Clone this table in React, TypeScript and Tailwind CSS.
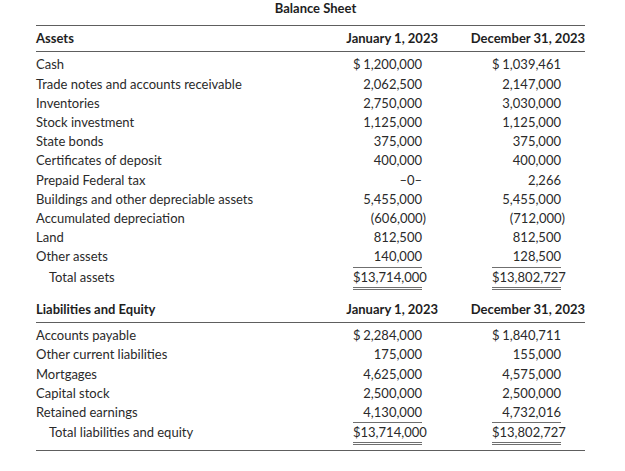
import React from "react";

type Row = {
  label: string;
  jan: string;
  dec: string;
  janDollar?: boolean;
  decDollar?: boolean;
  neg?: boolean;
  rule?: "single" | "double";
  indent?: boolean;
};

const assets: Row[] = [
  { label: "Cash", jan: "1,200,000", dec: "1,039,461", janDollar: true, decDollar: true },
  { label: "Trade notes and accounts receivable", jan: "2,062,500", dec: "2,147,000" },
  { label: "Inventories", jan: "2,750,000", dec: "3,030,000" },
  { label: "Stock investment", jan: "1,125,000", dec: "1,125,000" },
  { label: "State bonds", jan: "375,000", dec: "375,000" },
  { label: "Certificates of deposit", jan: "400,000", dec: "400,000" },
  { label: "Prepaid Federal tax", jan: "–0–", dec: "2,266" },
  { label: "Buildings and other depreciable assets", jan: "5,455,000", dec: "5,455,000" },
  { label: "Accumulated depreciation", jan: "(606,000", dec: "(712,000", neg: true },
  { label: "Land", jan: "812,500", dec: "812,500" },
  { label: "Other assets", jan: "140,000", dec: "128,500", rule: "single" },
  { label: "Total assets", jan: "$13,714,000", dec: "$13,802,727", rule: "double", indent: true },
];

const liabilities: Row[] = [
  { label: "Accounts payable", jan: "2,284,000", dec: "1,840,711", janDollar: true, decDollar: true },
  { label: "Other current liabilities", jan: "175,000", dec: "155,000" },
  { label: "Mortgages", jan: "4,625,000", dec: "4,575,000" },
  { label: "Capital stock", jan: "2,500,000", dec: "2,500,000" },
  { label: "Retained earnings", jan: "4,130,000", dec: "4,732,016", rule: "single" },
  { label: "Total liabilities and equity", jan: "$13,714,000", dec: "$13,802,727", rule: "double", indent: true },
];

function Amount({ value, dollar, neg, rule }: { value: string; dollar?: boolean; neg?: boolean; rule?: Row["rule"] }) {
  const ruleClass =
    rule === "single"
      ? "border-b border-[#6f6f6f]"
      : rule === "double"
      ? "border-b-[3px] border-double border-[#6f6f6f]"
      : "";
  return (
    <div className={`w-[69px] flex justify-between self-start ${ruleClass}`}>
      <span>{dollar ? "$" : ""}</span>
      <span>
        {value}
        {neg && <span className="-mr-[4px]">)</span>}
      </span>
    </div>
  );
}

function Section({ title, rows }: { title: string; rows: Row[] }) {
  return (
    <div>
      <div className="grid grid-cols-[1fr_150px_147px] h-[26px] items-center border-b border-[#5e5e5e] font-bold text-[#1e1e1e]">
        <div>{title}</div>
        <div className="text-right">January 1, 2023</div>
        <div className="text-right">December 31, 2023</div>
      </div>
      <div className="pt-[3.4px]">
        {rows.map((r) => (
          <div key={r.label} className="grid grid-cols-[1fr_150px_147px] leading-[19.2px]">
            <div className={r.indent ? "pl-[13px]" : ""}>{r.label}</div>
            <div className="flex justify-end pr-[16px]">
              <Amount value={r.jan} dollar={r.janDollar} neg={r.neg} rule={r.rule} />
            </div>
            <div className="flex justify-end pr-[24px]">
              <Amount value={r.dec} dollar={r.decDollar} neg={r.neg} rule={r.rule} />
            </div>
          </div>
        ))}
      </div>
    </div>
  );
}

export default function App() {
  return (
    <div
      className="w-[625px] h-[471px] bg-white text-[#2a2a2a] text-[13px] pl-[36px] pr-[40px]"
      style={{ fontFamily: "Lato, 'Open Sans', sans-serif" }}
    >
      <div className="h-[25px] leading-[16px] text-center font-bold text-[#1e1e1e] pl-[10px]">Balance Sheet</div>
      <div className="border-t border-[#5e5e5e]">
        <Section title="Assets" rows={assets} />
      </div>
      <div className="mt-[7px]">
        <Section title="Liabilities and Equity" rows={liabilities} />
      </div>
      <div className="mt-[5px] border-t border-[#5e5e5e]" />
    </div>
  );
}
